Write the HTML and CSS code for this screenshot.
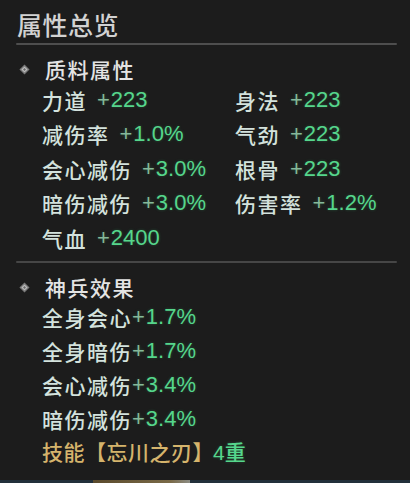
FILE: index.html
```html
<!DOCTYPE html>
<html lang="zh-CN">
<head>
<meta charset="utf-8">
<title>属性总览</title>
<link rel="stylesheet" href="styles.css">
</head>
<body>
<div class="panel">
  <h1 class="title">属性总览</h1>
  <div class="rule"></div>

  <section class="group">
    <h2 class="group-head">
      <svg class="gem" viewBox="0 0 12 12" aria-hidden="true">
        <path d="M6 0.5 L11.5 6 L6 11.5 L0.5 6 Z" fill="#7a7a7a"/>
        <path d="M6 2.6 L9.4 6 L6 9.4 L2.6 6 Z" fill="#bdbdbd"/>
        <path d="M6 4.4 L7.6 6 L6 7.6 L4.4 6 Z" fill="#6a6a6a"/>
      </svg>
      质料属性
    </h2>
    <div class="stats stats-2col">
      <div class="stat"><span class="name">力道</span><span class="val"><span class="plus">+</span>223</span></div>
      <div class="stat"><span class="name">身法</span><span class="val"><span class="plus">+</span>223</span></div>
      <div class="stat"><span class="name">减伤率</span><span class="val"><span class="plus">+</span>1.0%</span></div>
      <div class="stat"><span class="name">气劲</span><span class="val"><span class="plus">+</span>223</span></div>
      <div class="stat"><span class="name">会心减伤</span><span class="val"><span class="plus">+</span>3.0%</span></div>
      <div class="stat"><span class="name">根骨</span><span class="val"><span class="plus">+</span>223</span></div>
      <div class="stat"><span class="name">暗伤减伤</span><span class="val"><span class="plus">+</span>3.0%</span></div>
      <div class="stat"><span class="name">伤害率</span><span class="val"><span class="plus">+</span>1.2%</span></div>
      <div class="stat"><span class="name">气血</span><span class="val"><span class="plus">+</span>2400</span></div>
    </div>
  </section>

  <div class="rule rule-mid"></div>

  <section class="group">
    <h2 class="group-head">
      <svg class="gem" viewBox="0 0 12 12" aria-hidden="true">
        <path d="M6 0.5 L11.5 6 L6 11.5 L0.5 6 Z" fill="#7a7a7a"/>
        <path d="M6 2.6 L9.4 6 L6 9.4 L2.6 6 Z" fill="#bdbdbd"/>
        <path d="M6 4.4 L7.6 6 L6 7.6 L4.4 6 Z" fill="#6a6a6a"/>
      </svg>
      神兵效果
    </h2>
    <div class="stats stats-list">
      <div class="stat tight"><span class="name">全身会心</span><span class="val"><span class="plus">+</span>1.7%</span></div>
      <div class="stat tight"><span class="name">全身暗伤</span><span class="val"><span class="plus">+</span>1.7%</span></div>
      <div class="stat tight"><span class="name">会心减伤</span><span class="val"><span class="plus">+</span>3.4%</span></div>
      <div class="stat tight"><span class="name">暗伤减伤</span><span class="val"><span class="plus">+</span>3.4%</span></div>
      <div class="stat skill"><span class="skill-name">技能【忘川之刃】</span><span class="val">4重</span></div>
    </div>
  </section>

  <div class="footer-strip"><span class="footer-tab"></span></div>
</div>
</body>
</html>
```

FILE: styles.css
```css
* { box-sizing: border-box; }

html, body {
  margin: 0;
  padding: 0;
  background: #1c1c1c;
}

body {
  width: 410px;
  height: 483px;
  overflow: hidden;
  font-family: "Liberation Sans", "Noto Sans CJK SC", sans-serif;
}

.panel {
  position: relative;
  height: 483px;
  padding: 8px 13px 0 16px;
  background: #1c1c1c;
}

.title {
  margin: 0;
  padding-left: 1px;
  font-family: "Noto Sans CJK SC", sans-serif;
  font-size: 25px;
  font-weight: 500;
  line-height: 32px;
  color: #d2d2d2;
  letter-spacing: 0.5px;
}

.rule {
  height: 2px;
  margin-top: 3px;
  background: #4e4e4e;
  border-radius: 1px;
}

.rule-mid {
  margin-top: 6px;
  background: #464646;
}

.group-head {
  display: flex;
  align-items: center;
  margin: 12px 0 0;
  font-family: "Noto Sans CJK SC", sans-serif;
  font-size: 21px;
  font-weight: 500;
  line-height: 24px;
  color: #e4e4e4;
  letter-spacing: 1.5px;
}

.gem {
  width: 11px;
  height: 11px;
  margin: 0 15px 0 3px;
  flex: none;
}

.stats {
  padding-left: 26px;
}

.stats-2col {
  display: grid;
  grid-template-columns: 193px 1fr;
  grid-auto-rows: 34.5px;
  margin-top: 1.5px;
}

.stats-list {
  display: grid;
  grid-auto-rows: 34px;
  margin-top: 0.5px;
}

.stat {
  display: flex;
  align-items: center;
  gap: 10px;
  white-space: nowrap;
}

.stat.tight,
.stat.skill {
  gap: 0;
}

.name {
  font-family: "Noto Sans CJK SC", sans-serif;
  font-size: 21px;
  font-weight: 500;
  color: #d3e2dd;
  letter-spacing: 1.5px;
}

.val {
  font-size: 22px;
  color: #56d68c;
  text-shadow: 0 0 3px rgba(60, 200, 120, 0.3);
}

.plus {
  color: #86b89a;
  margin-right: 1px;
}

.skill {
  margin-top: -3px;
}

.skill-name {
  font-family: "Noto Sans CJK SC", sans-serif;
  font-size: 21px;
  font-weight: 500;
  color: #d5b46c;
  letter-spacing: 0.5px;
}

.skill .val {
  font-family: "Liberation Sans", "Noto Sans CJK SC", sans-serif;
  font-size: 21px;
  font-weight: 500;
  margin-left: -1px;
}

/* thin tab strip hugging the bottom edge */
.footer-strip {
  position: absolute;
  left: 0;
  right: 0;
  bottom: 0;
  height: 3px;
  background: #22303b;
}

.footer-tab {
  position: absolute;
  left: 93px;
  width: 97px;
  top: 0;
  bottom: 0;
  background: linear-gradient(90deg, #5a4a2c, #7a6a48 80%, #8c8c84);
}
```
